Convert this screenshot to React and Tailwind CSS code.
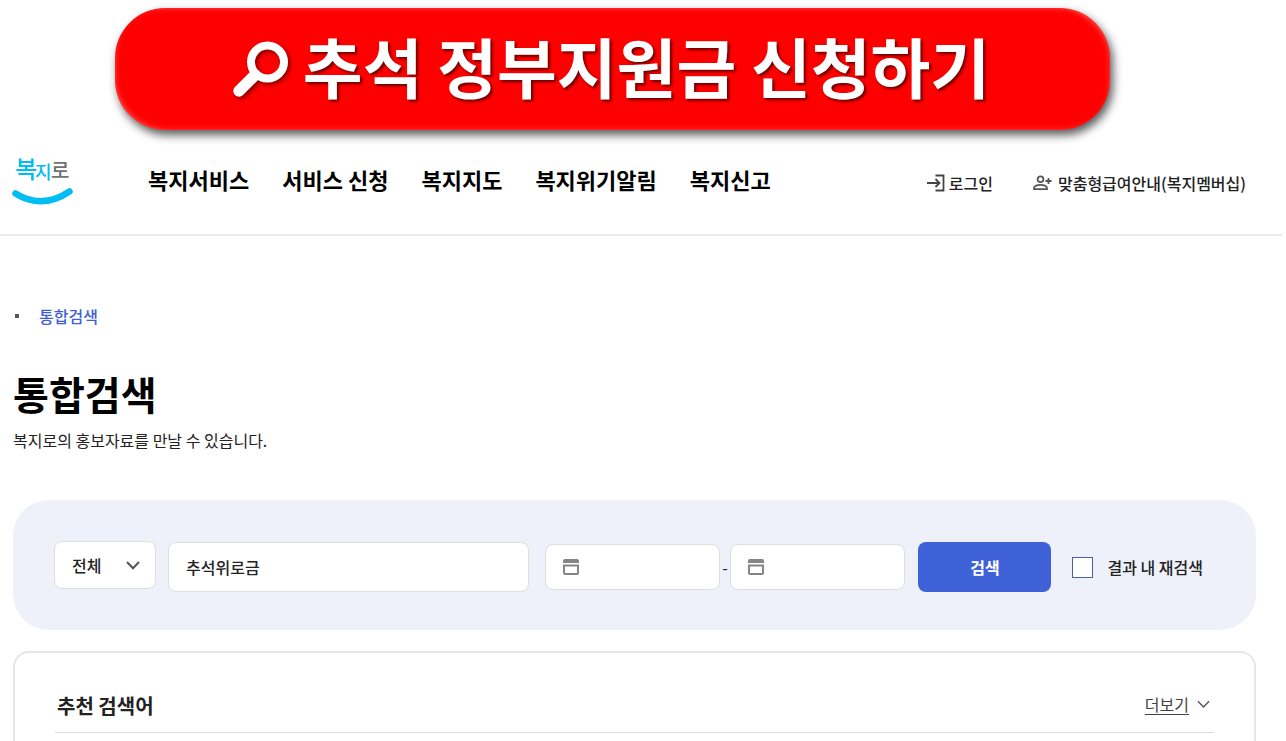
import React, { useState } from "react";

const navItems = ["복지서비스", "서비스 신청", "복지지도", "복지위기알림", "복지신고"];

function SearchIcon() {
  return (
    <svg
      width="60"
      height="60"
      viewBox="0 0 60 60"
      fill="none"
      stroke="currentColor"
      strokeLinecap="round"
      className="mt-1 drop-shadow-[2px_2px_2px_rgba(0,0,0,0.5)]"
    >
      <circle cx="36.500" cy="23" r="16.500" strokeWidth="8" />
      <path d="M24 36 8 52" strokeWidth="11.500" />
    </svg>
  );
}

function Logo() {
  return (
    <svg width="64" height="66" viewBox="-1 -12 64 66" role="img" aria-label="복지로" className="overflow-visible">
      <g fontFamily="'Noto Sans CJK KR', sans-serif" fontWeight="500">
        <text x="3" y="26" fontSize="24" fill="#00bdf2">복</text>
        <text x="23" y="27" fontSize="18" fill="#00bdf2">지</text>
        <text x="39" y="26" fontSize="20" fill="#6f7275">로</text>
      </g>
      <path d="M3.500 41.500Q30 58 57.500 39.500" fill="none" stroke="#00bdf2" strokeWidth="6.500" strokeLinecap="round" />
    </svg>
  );
}

function LoginIcon() {
  return (
    <svg width="18" height="18" viewBox="0 0 18 18" fill="none" stroke="#444" strokeWidth="1.800">
      <path d="M8.500 1.500H16.500V16.500H8.500" />
      <path d="M0 9H12.500M8.500 5 12.500 9 8.500 13" />
    </svg>
  );
}

function MemberIcon() {
  return (
    <svg width="19" height="16" viewBox="0 0 19 16" fill="none" stroke="#555" strokeWidth="1.800">
      <circle cx="7.500" cy="4.300" r="2.900" />
      <path d="M1 14.200V13C1 11 4.500 9.800 7.500 9.800S14 11 14 13V14.200Z" />
      <path d="M12.500 6H18.500M15.500 3V9" />
    </svg>
  );
}

function Chevron({ width = 14, strokeWidth = 2 }) {
  return (
    <svg width={width} height="9" viewBox="0 0 14 9" fill="none" stroke="#555" strokeWidth={strokeWidth}>
      <path d="M1 1 7 7.200 13 1" />
    </svg>
  );
}

function DateField({ label }) {
  return (
    <div className="relative min-w-0 flex-1">
      <svg width="16" height="16" viewBox="0 0 16 16" className="absolute left-[18px] top-[15px]">
        <path d="M0 4V2Q0 0 2 0H14Q16 0 16 2V4Z" fill="#858585" />
        <path d="M1 6.500H15V14Q15 15 14 15H2Q1 15 1 14Z" fill="none" stroke="#858585" strokeWidth="2" />
      </svg>
      <input
        type="text"
        aria-label={label}
        className="block h-[46px] w-full rounded-lg border border-[#dedede] bg-white pl-11 pr-2 text-base"
      />
    </div>
  );
}

export default function App() {
  const [keyword, setKeyword] = useState("추석위로금");
  const [within, setWithin] = useState(false);

  return (
    <div className="mr-1 font-['Noto_Sans_CJK_KR',sans-serif] text-[#222]">
      {/* Banner */}
      <div className="pt-2 pl-[115px] pr-[172px]">
        <button
          type="button"
          className="flex h-[122px] w-full items-center justify-center gap-3 rounded-[50px] bg-[#ff0000] pr-1 pb-1 text-[65px] leading-none font-bold whitespace-nowrap text-white shadow-[3px_5px_10px_rgba(0,0,0,0.65),inset_4px_-4px_6px_-5px_rgba(255,255,255,0.4),inset_-4px_4px_6px_-5px_rgba(255,255,255,0.4)]"
        >
          <SearchIcon />
          <span className="pb-1 [text-shadow:2px_2px_3px_rgba(0,0,0,0.6)]">추석 정부지원금 신청하기</span>
        </button>
      </div>

      {/* Header */}
      <header className="flex h-[106px] items-start border-b-2 border-[#ebebeb] pt-[10px] pl-[11px] pr-9">
        <a href="#" className="shrink-0">
          <Logo />
        </a>
        <nav className="ml-[73px] flex gap-[33px] pt-[23px] text-[22px] leading-8 font-bold whitespace-nowrap text-black">
          {navItems.map((item) => (
            <a key={item} href="#">{item}</a>
          ))}
        </nav>
        <div className="ml-auto flex items-center gap-10 pt-[31px] text-base leading-6 font-medium whitespace-nowrap">
          <a href="#" className="flex items-center gap-1">
            <LoginIcon />
            로그인
          </a>
          <a href="#" className="flex items-center gap-1.5">
            <MemberIcon />
            맞춤형급여안내(복지멤버십)
          </a>
        </div>
      </header>

      <main className="pl-[13px] pr-[26px]">
        {/* Breadcrumb */}
        <div className="flex items-center pt-[68px] text-base leading-6 font-medium">
          <span className="ml-0.5 mr-5 size-1 bg-[#555]" />
          <a href="#" className="text-[#3f5fd6]">통합검색</a>
        </div>

        <h1 className="mt-[35px] text-[39px] leading-[60px] font-bold text-black">통합검색</h1>
        <p className="mt-[5px] text-base leading-6">복지로의 홍보자료를 만날 수 있습니다.</p>

        {/* Search form */}
        <form
          onSubmit={(e) => e.preventDefault()}
          className="mt-12 flex h-[130px] items-center rounded-[36px] bg-[#eef1fa] pl-[41px] pr-[53px] pt-1"
        >
          <div className="relative mb-1 w-[102px] shrink-0">
            <select
              aria-label="검색 구분"
              className="block h-12 w-full appearance-none rounded-lg border border-[#dedede] bg-white pl-[17px] text-base font-medium"
            >
              <option>전체</option>
            </select>
            <span className="pointer-events-none absolute top-5 right-4">
              <Chevron />
            </span>
          </div>
          <div className="ml-3 min-w-0 flex-1">
            <input
              type="text"
              aria-label="검색어"
              value={keyword}
              onChange={(e) => setKeyword(e.target.value)}
              className="block h-[50px] w-full rounded-lg border border-[#dedede] bg-white px-[17px] text-base font-medium"
            />
          </div>
          <div className="ml-4 flex min-w-0 flex-1 items-center gap-0.5">
            <DateField label="시작일" />
            <span className="text-base">-</span>
            <DateField label="종료일" />
          </div>
          <button type="submit" className="ml-[13px] h-[50px] w-[133px] shrink-0 rounded-lg bg-[#3f61d7] text-base font-bold text-white">
            검색
          </button>
          <label className="ml-[21px] flex shrink-0 items-center gap-[14px] text-base font-medium">
            <input
              type="checkbox"
              checked={within}
              onChange={(e) => setWithin(e.target.checked)}
              className="size-[21px] appearance-none border border-[#4a5fa5] bg-white checked:bg-[#3f61d7]"
            />
            결과 내 재검색
          </label>
        </form>

        {/* Recommended keywords */}
        <section className="mt-[21px] h-[90px] rounded-t-[16px] border-2 border-b-0 border-[#e6e6e6] px-10 pt-[35px]">
          <div className="flex items-start justify-between border-b border-[#dcdcdc] pr-1 pb-2 pl-0.5">
            <h2 className="text-xl leading-9 font-bold">추천 검색어</h2>
            <a href="#" className="flex items-center gap-2 pt-1 text-base leading-6 text-[#444]">
              <span className="underline underline-offset-3">더보기</span>
              <Chevron width={13} strokeWidth={1.5} />
            </a>
          </div>
        </section>
      </main>
    </div>
  );
}
